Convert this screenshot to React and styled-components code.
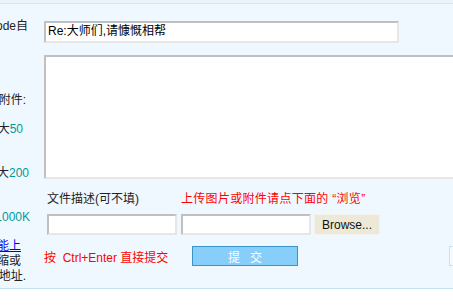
import React from 'react'
import styled, { createGlobalStyle } from 'styled-components'

const Global = createGlobalStyle`
	html, body {
		margin: 0;
		padding: 0;
		background: #fff;
		font-family: "Liberation Sans", "Noto Sans CJK SC", sans-serif;
		font-size: 12px;
		overflow: hidden;
	}
`

const Page = styled.div`
	width: 453px;
	height: 307px;
	overflow: hidden;
	padding-top: 3px;
	background: linear-gradient(#eaf4fb, #eaf4fb) top / 100% 3px no-repeat, #fff;
`

const Panel = styled.div`
	display: flex;
	height: 284px;
	background: #f0f8ff;
	border-top: 1px solid #d4e7f4;
	border-bottom: 1px solid #c6e2f1;
`

// left cell is wider than the window, only its right end shows
const LeftCol = styled.div`
	width: 44px;
	flex: none;
	overflow: hidden;
	display: flex;
	flex-direction: column;
	color: #222;
`

const Line = styled.div`
	display: flex;
	justify-content: flex-end;
	white-space: nowrap;
	line-height: 15px;
	height: 15px;
	margin-top: ${({top}) => top || 0}px;
	padding-right: ${({end}) => 44 - end}px;
`

const Teal = styled.span`
	color: #009999;
`

const Link = styled.span`
	color: #0000ee;
	text-decoration: underline;
`

const RightCol = styled.div`
	flex: 1;
	display: flex;
	flex-direction: column;
	min-width: 0;
`

const TextBox = styled.div`
	box-sizing: border-box;
	width: ${({w}) => w}px;
	height: ${({h}) => h}px;
	flex: none;
	background: #fff;
	border-top: 2px solid #c0c0c0;
	border-left: 2px solid #c0c0c0;
	border-right: 2px solid #e6e6e6;
	border-bottom: 2px solid #e6e6e6;
	padding: 1px 2px;
	line-height: 15px;
	color: #000;
	white-space: nowrap;
	overflow: hidden;
`

const Subject = styled(TextBox)`
	margin-top: 17px;
`

const Content = styled(TextBox)`
	margin-top: 12px;
`

const LabelRow = styled.div`
	display: flex;
	margin-top: 12px;
	padding-left: 3px;
	line-height: 16px;
	height: 16px;
`

const Label = styled.div`
	width: 134px;
	color: #222;
	white-space: nowrap;
`

const Red = styled.span`
	color: #ff0000;
	white-space: nowrap;
	letter-spacing: 0.3px;
`

const FileRow = styled.div`
	display: flex;
	gap: 4px;
	margin-top: 7px;
	padding-left: 3px;
	align-items: center;
`

const BrowseBtn = styled.div`
	box-sizing: border-box;
	width: 66px;
	height: 21px;
	margin-left: -1px;
	background: #ece9d8;
	border: 1px solid #f4f3ee;
	display: flex;
	align-items: center;
	justify-content: center;
	color: #111;
`

const SubmitRow = styled.div`
	display: flex;
	align-items: center;
	margin-top: 11px;
	height: 20px;
`

const Hint = styled.div`
	color: #ff0000;
	width: 148px;
	white-space: nowrap;
`

const SubmitBtn = styled.div`
	box-sizing: border-box;
	width: 106px;
	height: 20px;
	background: #87cefa;
	border: 1px solid #3a94c8;
	color: #fff;
	display: flex;
	align-items: center;
	justify-content: center;
	letter-spacing: 10px;
	text-indent: 10px;
`

const GhostBtn = styled.div`
	box-sizing: border-box;
	width: 20px;
	height: 20px;
	margin-left: auto;
	margin-right: -16px;
	border: 1px solid #c8e2f0;
	background: #f4faff;
`

const App = () => (
	<Page>
		<Global />
		<Panel>
			<LeftCol>
				<Line top={15} end={28}>Code自</Line>
				<Line top={59} end={26}>上传附件:</Line>
				<Line top={14} end={23}>最大<Teal>50</Teal></Line>
				<Line top={29} end={29}>最大<Teal>200</Teal></Line>
				<Line top={29} end={30}><Teal>1000K</Teal></Line>
				<Line top={14} end={21}><Link>不能上</Link></Line>
				<Line end={21}>压缩或</Line>
				<Line end={26}>链接地址.</Line>
			</LeftCol>
			<RightCol>
				<Subject w={355} h={22}>Re:大师们,请慷慨相帮</Subject>
				<Content w={430} h={124} />
				<LabelRow>
					<Label>文件描述(可不填)</Label>
					<Red>上传图片或附件请点下面的 “浏览”</Red>
				</LabelRow>
				<FileRow>
					<TextBox w={130} h={21} />
					<TextBox w={130} h={21} />
					<BrowseBtn>Browse...</BrowseBtn>
				</FileRow>
				<SubmitRow>
					<Hint>按&nbsp; Ctrl+Enter 直接提交</Hint>
					<SubmitBtn>提交</SubmitBtn>
					<GhostBtn />
				</SubmitRow>
			</RightCol>
		</Panel>
	</Page>
)

export default App
